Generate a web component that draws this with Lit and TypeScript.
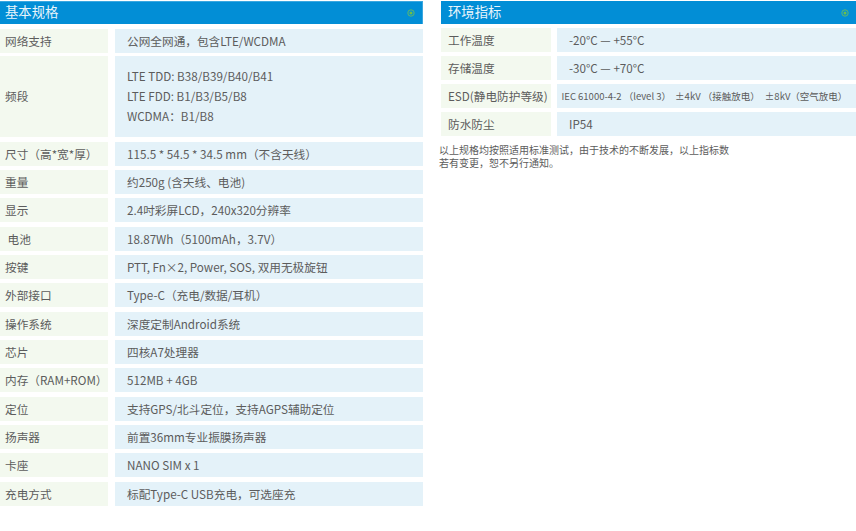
import { LitElement, html, css, svg } from "lit";
import { customElement } from "lit/decorators.js";

const left: [string, string | string[]][] = [
  ["网络支持", "公网全网通，包含LTE/WCDMA"],
  ["频段", ["LTE TDD: B38/B39/B40/B41", "LTE FDD: B1/B3/B5/B8", "WCDMA：B1/B8"]],
  ["尺寸（高*宽*厚）", "115.5 * 54.5 * 34.5 mm（不含天线）"],
  ["重量", "约250g (含天线、电池)"],
  ["显示", "2.4吋彩屏LCD，240x320分辨率"],
  [" 电池", "18.87Wh（5100mAh，3.7V）"],
  ["按键", "PTT, Fn×2, Power, SOS, 双用无极旋钮"],
  ["外部接口", "Type-C（充电/数据/耳机）"],
  ["操作系统", "深度定制Android系统"],
  ["芯片", "四核A7处理器"],
  ["内存（RAM+ROM）", "512MB + 4GB"],
  ["定位", "支持GPS/北斗定位，支持AGPS辅助定位"],
  ["扬声器", "前置36mm专业振膜扬声器"],
  ["卡座", "NANO SIM x 1"],
  ["充电方式", "标配Type-C USB充电，可选座充"],
];

const dot = svg`<svg class="dot" width="8" height="8" viewBox="0 0 8 8"><circle cx="4" cy="4" r="3.2" fill="none" stroke="#5fb86a" stroke-width="1"/><circle cx="4" cy="4" r="1.5" fill="#6cc04a"/></svg>`;

@customElement("app-root")
export class AppRoot extends LitElement {
  static styles = css`
    :host {
      display: block;
      width: 856px;
      height: 531px;
      background: #fff;
      overflow: hidden;
      font-family: "Noto Sans CJK SC", "Noto Sans", sans-serif;
      font-size: 11.67px;
      color: #5c5c5c;
    }
    .page { display: flex; align-items: flex-start; padding-top: 1px; }
    .col-left { width: 423px; flex: none; }
    .col-right { width: 415px; flex: none; margin-left: 18px; }
    .head {
      height: 23px;
      background: #028ed6;
      color: #e9f5fb;
      font-size: 13.33px;
      display: flex;
      align-items: center;
      justify-content: space-between;
      padding: 0 7px 0 5px;
      box-sizing: border-box;
    }
    .head span { margin-top: -3px; }
    .col-left .head { border-right: 1px solid #3aa7e0; border-top: 1px solid #3aa7e0; }
    .col-right .head { padding-left: 7px; padding-right: 7px; }
    .rows-left { display: flex; flex-direction: column; gap: 4.33px; margin-top: 5px; }
    .rows-right { display: flex; flex-direction: column; gap: 4px; margin-top: 4px; }
    .row { display: flex; height: 24px; }
    .row.tall { height: 81px; margin-top: -1px; }
    .label {
      background: #f3f9ef;
      display: flex;
      align-items: center;
      white-space: pre;
      box-sizing: border-box;
      padding-bottom: 1px;
    }
    .col-left .label { width: 108px; padding-left: 5px; }
    .col-left .value { margin-left: 7px; width: 308px; padding-left: 12px; }
    .col-right .label { width: 110px; padding-left: 7px; }
    .col-right .value { margin-left: 6px; width: 299px; padding-left: 12px; }
    .value {
      background: #e4f2f9;
      display: flex;
      flex-direction: column;
      justify-content: center;
      white-space: pre;
      box-sizing: border-box;
      padding-bottom: 1px;
    }
    .tall .label, .tall .value { padding-bottom: 2px; }
    .col-right .value.small { font-size: 9.5px; padding-left: 4.5px; flex-direction: row; justify-content: flex-start; align-items: center; }
    .g2 { margin-left: 2px; }
    .g3 { margin-left: 3px; }
    .line { height: 20px; line-height: 20px; }
    .note {
      font-size: 10px;
      line-height: 13px;
      margin: 7px 0 0 -2px;
      white-space: pre;
    }
  `;

  render() {
    return html`<div class="page">
      <section class="col-left">
        <div class="head"><span>基本规格</span>${dot}</div>
        <div class="rows-left">
          ${left.map(([k, v]) => html`<div class="row ${Array.isArray(v) ? "tall" : ""}">
            <div class="label">${k}</div>
            <div class="value">${Array.isArray(v)
              ? v.map((l) => html`<div class="line">${l}</div>`)
              : v}</div>
          </div>`)}
        </div>
      </section>
      <section class="col-right">
        <div class="head"><span>环境指标</span>${dot}</div>
        <div class="rows-right">
          <div class="row"><div class="label">工作温度</div><div class="value">-20°C — +55°C</div></div>
          <div class="row"><div class="label">存储温度</div><div class="value">-30°C — +70°C</div></div>
          <div class="row"><div class="label">ESD(静电防护等级)</div>
            <div class="value small"><span>IEC 61000-4-2 （level 3） </span><span class="g2">±4kV （接触放电） </span><span class="g3">±8kV（空气放电）</span></div></div>
          <div class="row"><div class="label">防水防尘</div><div class="value">IP54</div></div>
        </div>
        <div class="note">以上规格均按照适用标准测试，由于技术的不断发展，以上指标数
若有变更，恕不另行通知。</div>
      </section>
    </div>`;
  }
}
